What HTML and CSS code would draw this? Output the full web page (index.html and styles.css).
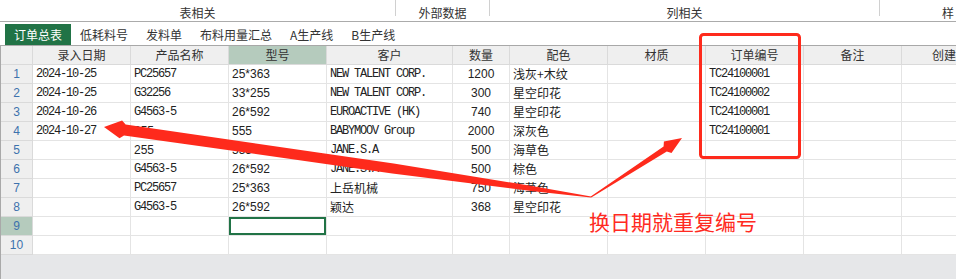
FILE: index.html
```html
<!DOCTYPE html>
<html lang="zh-CN">
<head>
    <meta charset="UTF-8">
    <meta name="viewport" content="width=device-width, initial-scale=1.0">
    <title>订单总表</title>
    <link rel="stylesheet" href="styles.css">
</head>
<body>
    <div class="window">
        <div class="ribbon">
            <div class="group g1">表相关</div>
            <span class="sep"></span>
            <div class="group g2">外部数据</div>
            <span class="sep"></span>
            <div class="group g3">列相关</div>
            <span class="sep"></span>
            <div class="group g4">样</div>
        </div>

        <div class="tabs">
            <span class="tab active">订单总表</span>
            <span class="tab">低耗料号</span>
            <span class="tab">发料单</span>
            <span class="tab">布料用量汇总</span>
            <span class="tab">A生产线</span>
            <span class="tab">B生产线</span>
        </div>

        <div class="sheet">
            <div class="c h"></div>
            <div class="c h">录入日期</div>
            <div class="c h">产品名称</div>
            <div class="c h picked">型号</div>
            <div class="c h">客户</div>
            <div class="c h">数量</div>
            <div class="c h">配色</div>
            <div class="c h">材质</div>
            <div class="c h">订单编号</div>
            <div class="c h">备注</div>
            <div class="c h last">创建</div>

            <div class="c n">1</div>
            <div class="c mono">2024-10-25</div>
            <div class="c mono">PC25657</div>
            <div class="c num">25*363</div>
            <div class="c mono">NEW TALENT CORP.</div>
            <div class="c num qty">1200</div>
            <div class="c">浅灰+木纹</div>
            <div class="c"></div>
            <div class="c mono">TC24100001</div>
            <div class="c"></div>
            <div class="c"></div>

            <div class="c n">2</div>
            <div class="c mono">2024-10-25</div>
            <div class="c mono">G32256</div>
            <div class="c num">33*255</div>
            <div class="c mono">NEW TALENT CORP.</div>
            <div class="c num qty">300</div>
            <div class="c">星空印花</div>
            <div class="c"></div>
            <div class="c mono">TC24100002</div>
            <div class="c"></div>
            <div class="c"></div>

            <div class="c n">3</div>
            <div class="c mono">2024-10-26</div>
            <div class="c mono">G4563-5</div>
            <div class="c num">26*592</div>
            <div class="c mono">EUROACTIVE (HK)</div>
            <div class="c num qty">740</div>
            <div class="c">星空印花</div>
            <div class="c"></div>
            <div class="c mono">TC24100001</div>
            <div class="c"></div>
            <div class="c"></div>

            <div class="c n">4</div>
            <div class="c mono">2024-10-27</div>
            <div class="c num">255</div>
            <div class="c num">555</div>
            <div class="c mono">BABYMOOV Group</div>
            <div class="c num qty">2000</div>
            <div class="c">深灰色</div>
            <div class="c"></div>
            <div class="c mono">TC24100001</div>
            <div class="c"></div>
            <div class="c"></div>

            <div class="c n">5</div>
            <div class="c"></div>
            <div class="c num">255</div>
            <div class="c num">555</div>
            <div class="c mono">JANE.S.A</div>
            <div class="c num qty">500</div>
            <div class="c">海草色</div>
            <div class="c"></div>
            <div class="c"></div>
            <div class="c"></div>
            <div class="c"></div>

            <div class="c n">6</div>
            <div class="c"></div>
            <div class="c mono">G4563-5</div>
            <div class="c num">26*592</div>
            <div class="c mono">JANE.S.A</div>
            <div class="c num qty">500</div>
            <div class="c">棕色</div>
            <div class="c"></div>
            <div class="c"></div>
            <div class="c"></div>
            <div class="c"></div>

            <div class="c n">7</div>
            <div class="c"></div>
            <div class="c mono">PC25657</div>
            <div class="c num">25*363</div>
            <div class="c">上岳机械</div>
            <div class="c num qty">750</div>
            <div class="c">海草色</div>
            <div class="c"></div>
            <div class="c"></div>
            <div class="c"></div>
            <div class="c"></div>

            <div class="c n">8</div>
            <div class="c"></div>
            <div class="c mono">G4563-5</div>
            <div class="c num">26*592</div>
            <div class="c">颖达</div>
            <div class="c num qty">368</div>
            <div class="c">星空印花</div>
            <div class="c"></div>
            <div class="c"></div>
            <div class="c"></div>
            <div class="c"></div>

            <div class="c n picked">9</div>
            <div class="c"></div>
            <div class="c"></div>
            <div class="c current"></div>
            <div class="c"></div>
            <div class="c"></div>
            <div class="c"></div>
            <div class="c"></div>
            <div class="c"></div>
            <div class="c"></div>
            <div class="c"></div>

            <div class="c n">10</div>
            <div class="c"></div>
            <div class="c"></div>
            <div class="c"></div>
            <div class="c"></div>
            <div class="c"></div>
            <div class="c"></div>
            <div class="c"></div>
            <div class="c"></div>
            <div class="c"></div>
            <div class="c"></div>
        </div>

        <div class="footer"></div>

        <!-- annotation drawn over the screenshot -->
        <svg class="marks" width="956" height="279" viewBox="0 0 956 279">
            <rect x="700.5" y="34.5" width="99" height="123" rx="3" fill="none" stroke="#fe2a1c" stroke-width="3"/>
            <polygon fill="#fe2a1c" points="591.1,196.4 532,186 393.7,163.6 125.6,124.6 122.1,120.5 104,127 119.5,138.3 124,135.4 392.3,173.4 531.2,191 590.9,197.6"/>
            <polygon fill="#fe2a1c" points="590.7,196.5 663.6,146.4 663.9,141.4 682,138 671.5,153.1 666.8,151.4 591.3,197.5"/>
        </svg>
        <div class="note">换日期就重复编号</div>
    </div>
</body>
</html>
```

FILE: styles.css
```css
* {
    box-sizing: border-box;
}
body {
    margin: 0;
    background: #fff;
    font-family: "Noto Sans CJK SC", "Liberation Sans", sans-serif;
    font-size: 12px;
    color: #222;
    overflow: hidden;
}
.window {
    position: relative;
    height: 100vh;
    display: flex;
    flex-direction: column;
    overflow: hidden;
}
.ribbon {
    display: flex;
    flex: none;
    height: 22px;
    border-bottom: 1px solid #ababab;
    overflow: hidden;
}
.group {
    flex: none;
    padding-top: 5px;
    line-height: 16px;
    color: #333;
    text-align: center;
    white-space: nowrap;
}
.g1 { width: 395px; }
.g2 { width: 93px; }
.g3 { width: 389px; }
.g4 {
    width: 76px;
    text-align: left;
    padding-left: 62px;
}
.sep {
    flex: none;
    width: 1px;
    height: 16px;
    background: #d0d0d0;
}
.tabs {
    display: flex;
    align-items: flex-end;
    flex: none;
    height: 24px;
    padding-left: 5px;
    border-bottom: 1px solid #a8a8a8;
}
.tab {
    height: 21px;
    line-height: 21px;
    padding: 0 9px;
    color: #333;
    white-space: nowrap;
}
.tab.active {
    background: #217346;
    color: #fff;
}
.sheet {
    display: grid;
    grid-template-columns: 32px 98px 98px 98px 126px 57px 98px 98px 98px 98px 108px;
    grid-auto-rows: 19px;
    flex: none;
    border-left: 1px solid #a9a9a9;
}
.c {
    padding: 0 3px;
    line-height: 18px;
    border-right: 1px solid #e4e4e4;
    border-bottom: 1px solid #e4e4e4;
    white-space: nowrap;
    overflow: hidden;
}
.h {
    background: #efefef;
    color: #333;
    text-align: center;
    border-color: #dadada;
}
.h.last {
    text-align: left;
    padding-left: 30px;
}
.n {
    background: #efefef;
    color: #3d72ad;
    text-align: center;
    font-family: "Liberation Sans", sans-serif;
    border-color: #dadada;
}
.picked {
    background: #b5cbbd;
}
.mono {
    font-family: "Liberation Mono", monospace;
    font-size: 12px;
    letter-spacing: -1.2px;
}
.num {
    font-family: "Liberation Sans", sans-serif;
}
.qty {
    text-align: center;
}
.current {
    box-shadow: inset 0 0 0 2px #217346;
}
.footer {
    flex: 1;
    background: #e6e7e9;
    border-left: 1px solid #a9a9a9;
}
.marks {
    position: absolute;
    top: 0;
    left: 0;
    pointer-events: none;
}
.note {
    position: absolute;
    left: 589px;
    top: 209px;
    font-size: 21px;
    line-height: 25px;
    color: #ff2a22;
    white-space: nowrap;
}
```
